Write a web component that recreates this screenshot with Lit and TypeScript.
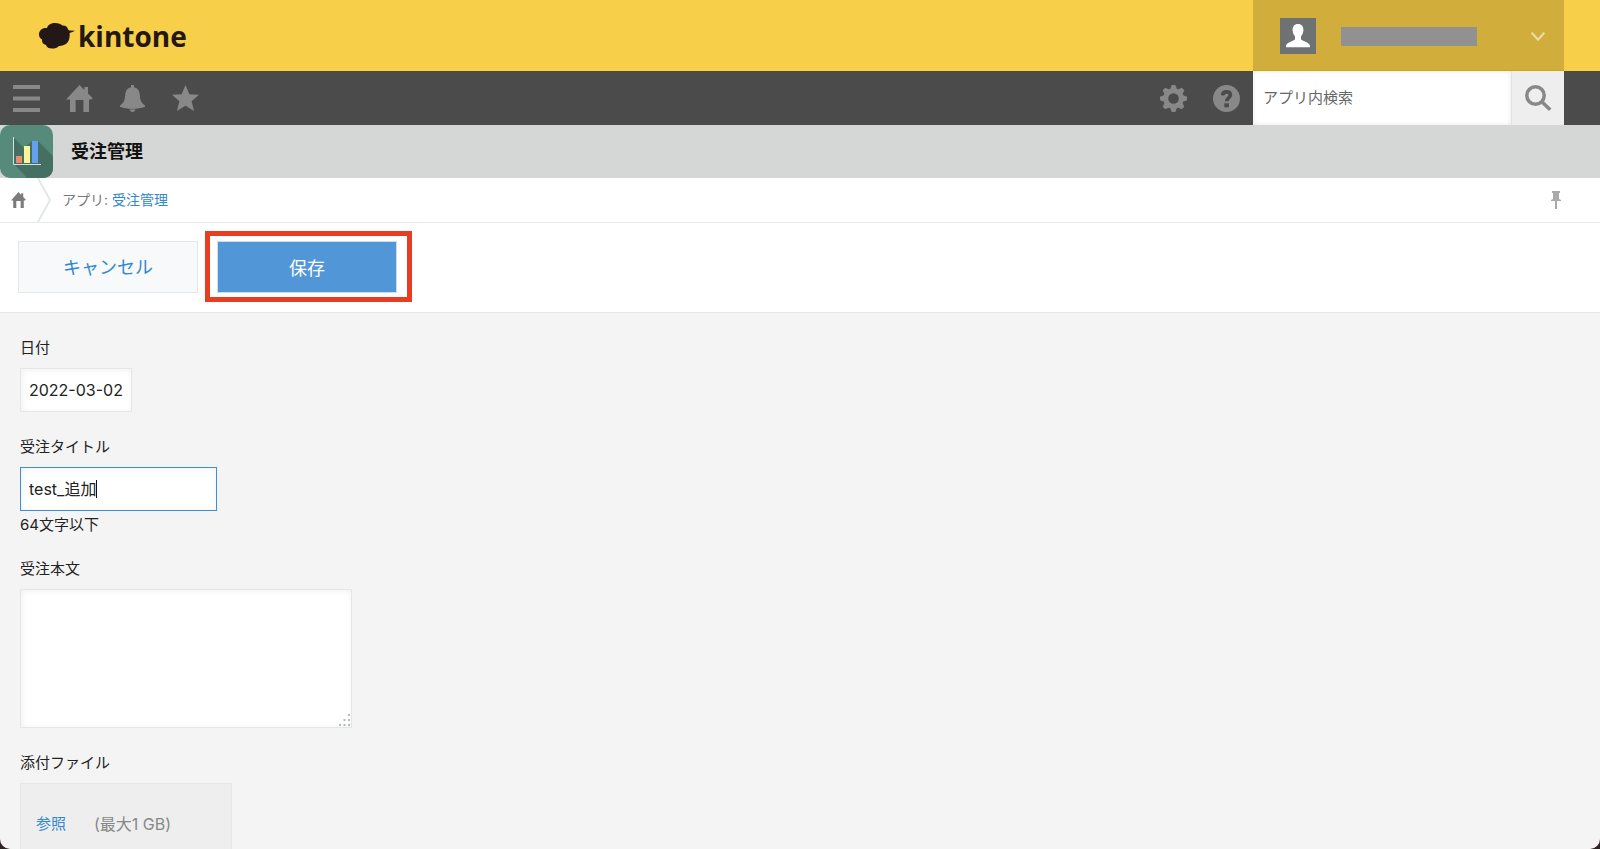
import { LitElement, html, css, svg } from "lit";
import { customElement, state } from "lit/decorators.js";

const houseShape = svg`<path d="M13.5 0 18.4 5V2H22v6.4l4.8 4.8-1.6 1.3H23V27h-5.6V15H9.6v12H4V14.5H0z"/>`;

const icons = {
  menu: html`<svg class="icon" viewBox="0 0 27 27" aria-hidden="true"><path d="M0 0h27v4H0zM0 11.5h27v4H0zM0 23h27v4H0z"/></svg>`,
  home: html`<svg class="icon" viewBox="0 0 27 27" aria-hidden="true">${houseShape}</svg>`,
  bell: html`<svg class="icon" viewBox="0 0 27 27" aria-hidden="true"><path d="M12 0h3v2.200c3.800.8 5.600 4 5.800 7.800.3 5.300 1.500 8 5.200 10.400v1.400c-3.400 1.400-7.800 2.100-12.500 2.100S4.400 23.200 1 21.800v-1.400c3.700-2.400 4.900-5.100 5.200-10.400.2-3.800 2-7 5.800-7.800z"/><path d="M10.500 24.600h6c-.5 1.600-1.500 2.400-3 2.400s-2.500-.8-3-2.400z"/></svg>`,
  star: html`<svg class="icon" viewBox="0 0 27 27" aria-hidden="true"><path d="m13.500 0 3.900 9.200 9.600.5-7.400 6.500 2.500 9.800-8.600-5.300L4.900 26l2.500-9.800L0 9.700l9.600-.5z"/></svg>`,
  gear: html`<svg class="icon" viewBox="-13.5 -13.5 27 27" aria-hidden="true">${[0, 45, 90, 135].map(
    (a) => svg`<path transform="rotate(${a})" d="M-3.500 -9 -1.800 -13.500H1.800L3.500 -9V9L1.800 13.500H-1.800L-3.500 9z"/>`
  )}<circle r="10.200"/><circle class="hub" r="5.300"/></svg>`,
  help: html`<svg class="icon" viewBox="0 0 27 27" aria-hidden="true"><circle cx="13.500" cy="13.500" r="13.500"/><path class="mark" d="M9.600 10.400c.1-2.700 1.700-3.500 4-3.500s3.800 1.100 3.800 3.100c0 2.700-3.700 2.900-3.700 6.300"/><path class="dot" d="M11.300 18.300h4.600v4h-4.600z"/></svg>`,
  search: html`<svg class="icon search-icon" viewBox="0 0 27 27" aria-hidden="true"><circle cx="10.500" cy="10.500" r="8.700"/><path d="m16.800 16.800 8.400 8"/></svg>`,
  pin: html`<svg class="pin" viewBox="0 0 10 18" aria-hidden="true"><path d="M1 0h8v2H8v6l2 1v1H6v8H4v-8H0V9l2-1V2H1z"/></svg>`,
};

@customElement("app-root")
export class AppRoot extends LitElement {
  @state() private orderTitle = "test_追加";

  static styles = css`
    :host {
      display: block;
      height: 100vh;
      background: #2e231e;
      color: #222;
      font-family: Inter, "Noto Sans CJK JP", sans-serif;
      font-size: 15px;
      line-height: 20px;
    }
    * {
      box-sizing: border-box;
    }
    button,
    input,
    textarea {
      margin: 0;
      padding: 0;
      border: 0;
      border-radius: 0;
      outline: 0;
      background: none;
      color: inherit;
      font: inherit;
    }
    button {
      cursor: pointer;
    }
    a {
      color: #3388cf;
      text-decoration: none;
    }
    svg {
      display: block;
      flex: none;
    }
    .window {
      display: flex;
      flex-direction: column;
      height: 100%;
      overflow: hidden;
      border-radius: 0 0 10px 10px;
      background: #f4f4f4;
    }
    .window > * {
      flex: none;
    }
    .brand-bar {
      display: flex;
      justify-content: space-between;
      height: 71px;
      padding: 0 36px 0 39px;
      background: #f8cf48;
    }
    .logo {
      display: flex;
      align-items: center;
      gap: 3px;
      color: #231815;
      font: bold 28px/36px "Open Sans", sans-serif;
    }
    .cloud {
      width: 36px;
      height: 26px;
    }
    .account {
      display: flex;
      align-items: center;
      width: 311px;
      padding: 2px 19px 0 27px;
      border-bottom: 1px solid #cfa610;
      background: #d1ae3b;
    }
    .avatar {
      width: 36px;
      height: 36px;
    }
    .account-name {
      width: 136px;
      height: 19px;
      margin: 0 auto 0 25px;
      background: #919191;
    }
    .chevron {
      width: 14px;
      height: 9px;
      fill: none;
      stroke: #ecdcaa;
      stroke-width: 2;
    }
    .toolbar {
      display: flex;
      height: 54px;
      padding-right: 36px;
      background: #4b4b4b;
    }
    .tool {
      display: grid;
      place-items: center;
      width: 53px;
      height: 100%;
    }
    .icon {
      width: 27px;
      height: 27px;
      fill: #888;
    }
    .hub,
    .dot {
      fill: #4b4b4b;
    }
    .mark {
      fill: none;
      stroke: #4b4b4b;
      stroke-width: 3.600;
    }
    .spacer {
      flex: 1;
    }
    .search {
      display: flex;
      width: 311px;
      background: #fff;
    }
    .search-box {
      flex: 1;
      min-width: 0;
      padding: 0 10px;
      box-shadow: inset 0 0 5px #e8e8e8;
    }
    .search-box::placeholder {
      color: #666;
      opacity: 1;
    }
    .search-button {
      border-left: 1px solid #e3e3e3;
      background: #eee;
    }
    .search-icon {
      fill: none;
      stroke: #888;
      stroke-width: 3.500;
    }
    .app-bar {
      display: flex;
      align-items: center;
      gap: 18px;
      height: 53px;
      background: #d5d7d6;
    }
    .app-icon {
      width: 53px;
      height: 53px;
    }
    h1 {
      margin: 0;
      font-size: 18px;
      line-height: 24px;
      color: #111;
    }
    .crumbs {
      display: flex;
      align-items: center;
      height: 45px;
      padding: 0 39px 0 11px;
      border-bottom: 1px solid #e8eaea;
      background: #fff;
      color: #777;
      font-size: 14px;
    }
    .crumb-home svg {
      width: 15px;
      height: 16px;
      fill: #7b7b7b;
    }
    .crumb-arrow {
      width: 14px;
      height: 44px;
      margin: 0 11px;
      fill: none;
      stroke: #e3e7e8;
      stroke-width: 2;
    }
    .pin {
      width: 10px;
      height: 18px;
      fill: #aaa;
    }
    .actions {
      display: flex;
      align-items: center;
      gap: 7px;
      padding: 8px 18px 10px;
      border-bottom: 1px solid #e3e7e8;
      background: #fff;
    }
    .action {
      width: 180px;
      height: 52px;
      padding-top: 3px;
      font-size: 18px;
    }
    .cancel {
      border: 1px solid #e3e7e8;
      background: #f7f9fa;
      color: #3388cf;
    }
    .highlight {
      padding: 5px 10px 4px 7px;
      border: 5px solid #ea3c20;
    }
    .save {
      display: block;
      border: 1px solid #cfdcea;
      background: #5196d6;
      color: #fff;
    }
    .form {
      display: flex;
      flex: 1 1 0;
      flex-direction: column;
      align-items: flex-start;
      gap: 22px;
      min-height: 0;
      padding: 22px 20px;
      overflow: auto;
      scrollbar-width: none;
    }
    .field {
      display: flex;
      flex: none;
      flex-direction: column;
      align-items: flex-start;
    }
    .label {
      margin-bottom: 7px;
      line-height: 26px;
    }
    .box {
      border: 1px solid #e3e7e8;
      background: #fff;
      box-shadow: inset 1px 1px 6px #f0f0f0;
    }
    .line {
      height: 44px;
      padding: 0 8px;
      font-size: 16px;
    }
    .date {
      width: 112px;
    }
    .title-box {
      display: flex;
      align-items: center;
      width: 197px;
    }
    .active {
      border-color: #3c8fd4;
    }
    .title-input {
      field-sizing: content;
      max-width: 100%;
      caret-color: transparent;
    }
    .caret {
      width: 1px;
      height: 18px;
      background: #111;
    }
    .hint {
      margin: 5px 0 0;
      line-height: 18px;
    }
    .area-wrap {
      position: relative;
    }
    .area {
      display: block;
      width: 332px;
      height: 139px;
      padding: 8px;
      resize: none;
    }
    .grip {
      position: absolute;
      right: 2px;
      bottom: 2px;
      width: 11px;
      height: 12px;
      fill: #b4b9be;
      pointer-events: none;
    }
    .attach {
      display: flex;
      gap: 28px;
      width: 212px;
      padding: 30px 15px;
      border: 1px solid #e3e7e8;
      background: #eee;
      color: #888;
    }
    .browse {
      color: #3388cf;
    }
    .limit {
      font-size: 16px;
    }
  `;

  private onTitle(e: InputEvent) {
    this.orderTitle = (e.target as HTMLInputElement).value;
  }

  render() {
    return html`
      <div class="window">
        <header class="brand-bar">
          <div class="logo">
            <svg class="cloud" viewBox="0 0 36 26" aria-hidden="true">
              <path fill="currentColor" d="M0 11.500C0 7 3.500 4.500 8 5c1-3.400 4.200-5 8-5 3.600 0 6 1 7.300 2.500 3-.4 5.200 1.300 5.700 3.800.3.600.7 1 1.400 1.100L36 7.700c-1.500 1-3.300 1.700-5.400 2.200.6 5.500-1 9.500-4.600 11.700-2.100 1.200-4.300 1.500-6.200 1.300-1.500 1.700-3.800 2.700-6.800 2.700-3.200 0-5.200-1.200-6-3.600-2.700-.6-4.300-2.500-4-5.500C1 15.500 0 13.700 0 11.500z"/>
            </svg>
            <span>kintone</span>
          </div>
          <button class="account" aria-label="アカウント">
            <svg class="avatar" viewBox="0 0 36 36" aria-hidden="true">
              <path fill="#6e7273" d="M0 0h36v36H0z"/>
              <path fill="#fff" d="M18 6c3.700 0 5.600 2.700 5.400 6.300-.2 2.600-1 4.600-2.400 6v3c1.200 1.700 9 3 9 6.900v1.100H6v-1.100c0-3.900 7.800-5.200 9-6.900v-3c-1.400-1.400-2.200-3.400-2.400-6C12.400 8.700 14.300 6 18 6z"/>
            </svg>
            <span class="account-name"></span>
            <svg class="chevron" viewBox="0 0 14 9" aria-hidden="true"><path d="m.700.700 6.300 7 6.300-7"/></svg>
          </button>
        </header>

        <nav class="toolbar">
          <button class="tool" aria-label="メニュー">${icons.menu}</button>
          <button class="tool" aria-label="ホーム">${icons.home}</button>
          <button class="tool" aria-label="通知">${icons.bell}</button>
          <button class="tool" aria-label="お気に入り">${icons.star}</button>
          <span class="spacer"></span>
          <button class="tool" aria-label="設定">${icons.gear}</button>
          <button class="tool" aria-label="ヘルプ">${icons.help}</button>
          <div class="search">
            <input class="search-box" type="text" aria-label="アプリ内検索" placeholder="アプリ内検索" />
            <button class="tool search-button" aria-label="検索">${icons.search}</button>
          </div>
        </nav>

        <div class="app-bar">
          <svg class="app-icon" viewBox="0 0 53 53" aria-hidden="true">
            <rect width="53" height="53" rx="10" fill="#568b7b"/>
            <path fill="#456f62" d="m14 13 10 10 8-7h6l15 15v12c0 6-4 10-10 10H27L14 39z"/>
            <path fill="#ea8a70" d="M16 31h6v7h-6z"/>
            <path fill="#faf59a" d="M24 21h6v17h-6z"/>
            <path fill="#679ff0" d="M32 16h6v22h-6z"/>
            <path fill="none" stroke="#d3e2dc" d="M13.500 12v27.500H41"/>
          </svg>
          <h1>受注管理</h1>
        </div>

        <nav class="crumbs">
          <a class="crumb-home" href="#" aria-label="ホーム"><svg viewBox="0 0 27 27" preserveAspectRatio="none" aria-hidden="true">${houseShape}</svg></a>
          <svg class="crumb-arrow" viewBox="0 0 14 44" aria-hidden="true"><path d="m1 0 12 22L1 44"/></svg>
          <span>アプリ: <a href="#">受注管理</a></span>
          <span class="spacer"></span>
          <button aria-label="固定">${icons.pin}</button>
        </nav>

        <div class="actions">
          <button class="action cancel">キャンセル</button>
          <div class="highlight"><button class="action save">保存</button></div>
        </div>

        <form class="form" @submit=${(e: Event) => e.preventDefault()}>
          <div class="field">
            <label class="label" for="date">日付</label>
            <input class="box line date" id="date" type="text" value="2022-03-02" />
          </div>
          <div class="field">
            <label class="label" for="title">受注タイトル</label>
            <div class="box line title-box active">
              <input class="title-input" id="title" type="text" .value=${this.orderTitle} @input=${this.onTitle} />
              <span class="caret"></span>
            </div>
            <p class="hint">64文字以下</p>
          </div>
          <div class="field">
            <label class="label" for="body">受注本文</label>
            <div class="area-wrap">
              <textarea class="box area" id="body"></textarea>
              <svg class="grip" viewBox="0 0 11 12" aria-hidden="true"><path d="M9 0h2v2H9zM4.500 5h2v2h-2zM9 5h2v2H9zM0 10h2v2H0zM4.500 10h2v2h-2zM9 10h2v2H9z"/></svg>
            </div>
          </div>
          <div class="field">
            <span class="label">添付ファイル</span>
            <div class="attach">
              <button class="browse" type="button">参照</button>
              <span class="limit">(最大1 GB)</span>
            </div>
          </div>
        </form>
      </div>
    `;
  }
}
